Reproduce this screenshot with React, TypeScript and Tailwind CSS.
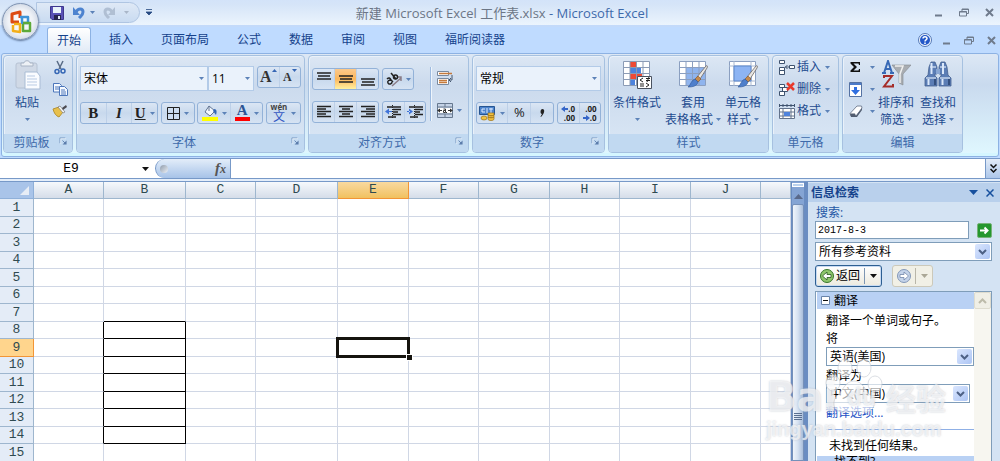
import React from "react";

const tabs = ["开始", "插入", "页面布局", "公式", "数据", "审阅", "视图", "福昕阅读器"];

const columns = [
  { name: "A", width: "w-[70px]" },
  { name: "B", width: "w-[82px]" },
  { name: "C", width: "w-[70px]" },
  { name: "D", width: "w-[82px]" },
  { name: "E", width: "w-[71px]" },
  { name: "F", width: "w-[70px]" },
  { name: "G", width: "w-[71px]" },
  { name: "H", width: "w-[70px]" },
  { name: "I", width: "w-[71px]" },
  { name: "J", width: "w-[70px]" },
  { name: "", width: "" },
];

const rows = [1, 2, 3, 4, 5, 6, 7, 8, 9, 10, 11, 12, 13, 14, 15];

// Small down arrow used by every drop-down
function Caret({ className = "text-[#5c82b8]" }: { className?: string }) {
  return (
    <svg viewBox="0 0 5 3" className={`h-[3px] w-[5px] shrink-0 ${className}`}>
      <path d="M0 0h5L2.500 3z" fill="currentColor" />
    </svg>
  );
}

function Group({
  title,
  launcher = false,
  className,
  children,
}: {
  title: string;
  launcher?: boolean;
  className: string;
  children: React.ReactNode;
}) {
  return (
    <section
      className={`flex h-[98px] shrink-0 flex-col overflow-hidden rounded-sm border border-[#a6c1e0] bg-linear-to-b from-[#dce7f4] via-[#cbdaed] via-30% to-[#dbe8f6] shadow-[inset_1px_1px_0_#e9f1fa] ${className}`}
    >
      <div className="flex min-h-0 flex-1">{children}</div>
      <div className="flex h-[18px] shrink-0 items-center bg-[#c1d9f1] px-1 text-[#3e6aaa]">
        <span className={launcher ? "flex-1 pb-px text-center leading-4" : "flex-1 pb-px text-center leading-4"}>{title}</span>
        {launcher && (
          <button aria-label={`${title}设置`} className="mb-1 ml-1 mr-px">
            <svg viewBox="0 0 9 9" className="h-2 w-2" fill="none">
              <path d="M1 7V1h6" stroke="#7d9cc4" />
              <path d="M2 8V2h6" stroke="#fff" strokeWidth=".6" />
              <path d="M4 4l3 3" stroke="#5b7cab" />
              <path d="M8.500 4v4.500H4z" fill="#5b7cab" />
            </svg>
          </button>
        )}
      </div>
    </section>
  );
}

// Bordered strip of joined buttons
function Strip({ children, className = "" }: { children: React.ReactNode; className?: string }) {
  return (
    <div
      className={`flex h-[22px] items-stretch divide-x divide-[#bdd0e8] rounded-[3px] border border-[#93b2d8] bg-linear-to-b from-[#dbe6f4] via-[#c8d9ed] to-[#d6e3f3] ${className}`}
    >
      {children}
    </div>
  );
}

function Tool({
  label,
  children,
  className = "",
}: {
  label: string;
  children: React.ReactNode;
  className?: string;
}) {
  return (
    <button
      aria-label={label}
      className={`flex min-w-0 flex-1 items-center justify-center gap-1 ${className}`}
    >
      {children}
    </button>
  );
}

function RibbonSelect({ label, value, className }: { label: string; value: string; className: string }) {
  return (
    <div className={`relative ${className}`}>
      <select
        aria-label={label}
        className="h-[25px] w-full appearance-none border border-[#b3cbe8] bg-[#eaf2fb] pl-[3px] text-black"
      >
        <option>{value}</option>
      </select>
      <span className="pointer-events-none absolute right-1 top-[11px]">
        <Caret />
      </span>
    </div>
  );
}

function PaneSelect({ label, value, className = "" }: { label: string; value: string; className?: string }) {
  return (
    <div className={`relative ${className}`}>
      <select
        id={label}
        aria-label={label}
        className="block h-[19px] w-full appearance-none border border-[#7f9db9] bg-white pl-[3px] leading-4 text-black"
      >
        <option>{value}</option>
      </select>
      <span className="pointer-events-none absolute right-[2px] top-[2px] flex h-[15px] w-[15px] items-center justify-center rounded-[2px] bg-linear-to-br from-[#dae6fe] to-[#adc5f4]">
        <svg viewBox="0 0 9 6" className="h-[6px] w-[9px]">
          <path d="M1 1l3.500 3.500L8 1" fill="none" stroke="#4d6185" strokeWidth="2" />
        </svg>
      </span>
    </div>
  );
}

function BigButton({ icon, lines, className }: { icon: React.ReactNode; lines: string[]; className: string }) {
  return (
    <button className={`flex shrink-0 flex-col items-center pt-1 leading-[17px] text-[#1e4b8f] ${className}`}>
      <span className="flex h-[34px] items-start justify-center">{icon}</span>
      <span className="whitespace-nowrap">{lines[0]}</span>
      <span className="flex h-[17px] items-center gap-[3px] whitespace-nowrap">
        {lines[1]}
        <Caret />
      </span>
    </button>
  );
}

function Lines({ d }: { d: string }) {
  return (
    <svg viewBox="0 0 14 14" className="h-[14px] w-[14px] shrink-0">
      <path d={d} stroke="#222" strokeWidth="1.500" fill="none" />
    </svg>
  );
}

function WindowButtons({ small = false }: { small?: boolean }) {
  return (
    <div className={small ? "flex items-center gap-[13px]" : "flex items-center gap-4"}>
      <button aria-label="最小化">
        <svg viewBox="0 0 9 9" className="h-[9px] w-[9px]">
          <path d="M1 7.500h7" stroke="#6f7b8c" strokeWidth="2" />
        </svg>
      </button>
      <button aria-label="还原">
        <svg viewBox="0 0 10 9" className="h-[9px] w-[10px]" fill="none" stroke="#6f7b8c">
          <path d="M3 3V1h6.500v4.500H8M3 1.500h6" />
          <path d="M.5 3.500h7v4.500h-7zM.5 4h7" />
        </svg>
      </button>
      <button aria-label="关闭">
        <svg viewBox="0 0 9 9" className="h-[9px] w-[9px]">
          <path d="M1 1l7 7M8 1L1 8" stroke="#6f7b8c" strokeWidth="2" />
        </svg>
      </button>
    </div>
  );
}

function OfficeLogo() {
  return (
    <svg viewBox="0 0 24 24" className="h-6 w-6" fill="none" strokeWidth="3" strokeLinejoin="round">
      <path d="M10 12H3V4l8-2v6" stroke="#dd4b12" />
      <path d="M11 7h8v6h-6V8" stroke="#3e94d8" strokeWidth="2.500" />
      <path d="M5 14h6v8l-7-1v-6" stroke="#f3ae18" strokeWidth="2.500" />
      <path d="M14 13h7v8h-7v-7" stroke="#5daa39" strokeWidth="2.500" />
    </svg>
  );
}

function TitleBar() {
  return (
    <header className="flex h-[27px] items-start border-b-2 border-[#c3dafa] bg-linear-to-b from-[#d3e3f9] via-[#d6e5f8] via-20% to-[#ebf4fd]">
      <div className="ml-9 mt-[2px] flex h-[21px] w-[104px] items-center rounded-r-full border border-[#afc5e2] bg-linear-to-b from-[#dfe9f6] to-[#c9dbf1] pl-[13px]">
        <button aria-label="保存">
          <svg viewBox="0 0 14 14" className="h-[14px] w-[14px]">
            <path d="M.5.500h13v13H2l-1.500-1.500z" fill="#5951b5" stroke="#3d368e" />
            <path d="M3 1h8v6H3z" fill="#e9f2fb" />
            <path d="M4 9h7v5H4z" fill="#26244d" />
            <path d="M8 10h2v3H8z" fill="#dfe6f5" />
          </svg>
        </button>
        <button aria-label="撤销" className="ml-2">
          <svg viewBox="0 0 13 13" className="h-[13px] w-[13px]">
            <path d="M4 6c2-4 7-4 7 0 0 3-2 4-4 6" fill="none" stroke="#4d83cf" strokeWidth="3" />
            <path d="M1 1v8h7z" fill="#4d83cf" />
          </svg>
        </button>
        <span className="ml-[5px] flex"><Caret /></span>
        <button aria-label="重做" className="ml-2">
          <svg viewBox="0 0 13 13" className="h-[13px] w-[13px]">
            <path d="M9 6C7 2 2 2 2 6c0 3 2 4 4 6" fill="none" stroke="#b0bfd3" strokeWidth="3" />
            <path d="M12 1v8H5z" fill="#b0bfd3" />
          </svg>
        </button>
        <span className="ml-2 flex"><Caret className="text-[#a9b6c8]" /></span>
      </div>
      <button aria-label="自定义快速访问工具栏" className="ml-[6px] mt-[9px]">
        <svg viewBox="0 0 6 6" className="h-[6px] w-[6px]">
          <path d="M0 .5h6M0 3h6L3 6z" fill="#274a82" stroke="#274a82" strokeWidth=".8" />
        </svg>
      </button>
      <h1 className="flex-1 whitespace-pre pl-12 text-center text-[13px] leading-[27px] text-[#6c7686]">
        新建 Microsoft Excel 工作表.xlsx <span className="text-[#3e6aaa]">- Microsoft Excel</span>
      </h1>
      <div className="ml-[130px] mr-[6px] mt-[8px] flex">
        <WindowButtons />
      </div>
    </header>
  );
}

function TabBar() {
  return (
    <nav className="flex h-[26px] items-end bg-[#bfdbff] pl-[47px]">
      <div className="flex gap-2">
        {tabs.map((tab, i) => (
          <button
            key={tab}
            className={
              i === 0
                ? "h-[26px] rounded-t-[3px] border border-b-0 border-[#8db2e3] bg-linear-to-b from-white to-[#e0eaf6] px-[9px] text-[#15428b]"
                : "h-[26px] px-[10px] text-[#15428b]"
            }
          >
            {tab}
          </button>
        ))}
      </div>
      <div className="ml-auto mr-1 flex h-[26px] items-center gap-[10px]">
        <button aria-label="帮助">
          <svg viewBox="0 0 14 14" className="h-[14px] w-[14px]">
            <circle cx="7" cy="7" r="6.500" fill="#eef5ff" stroke="#5578b5" />
            <circle cx="7" cy="7" r="5" fill="#2458c8" />
            <path d="M5 5.500c0-2.500 4-2.500 4 0C9 7 7 6.800 7 8.500M7 9.500V11" fill="none" stroke="#fff" strokeWidth="1.500" />
          </svg>
        </button>
        <WindowButtons small />
      </div>
    </nav>
  );
}

function ClipboardGroup() {
  return (
    <Group title="剪贴板" launcher className="w-[70px]">
      <BigButton
        className="w-[46px]"
        lines={["粘贴", ""]}
        icon={
          <svg viewBox="0 0 28 30" className="h-[30px] w-7">
            <rect x="3" y="3" width="21" height="25" rx="2" fill="#d0d9e6" stroke="#b6c2d3" />
            <path d="M8 6V3h3c0-3 6-3 6 0h3v3z" fill="#edf1f6" stroke="#a8b4c5" />
            <path d="M12 12h12l3 4v13H12z" fill="#fafcff" stroke="#a9bcd5" />
            <path d="M14 16h8M14 19h10M14 22h10M14 25h10" stroke="#b9cbe4" />
          </svg>
        }
      />
      <div className="flex flex-col">
        <button aria-label="剪切" className="flex h-[22px] w-5 items-center justify-center">
          <svg viewBox="0 0 12 15" className="h-[15px] w-3" fill="none">
            <path d="M3 1l4 8M9 1L5 9" stroke="#596b85" strokeWidth="1.500" />
            <circle cx="3" cy="11.500" r="2" stroke="#3566b4" strokeWidth="1.500" />
            <circle cx="9" cy="11" r="2" stroke="#3566b4" strokeWidth="1.500" />
          </svg>
        </button>
        <button aria-label="复制" className="flex h-[22px] w-5 items-center justify-center">
          <svg viewBox="0 0 15 13" className="h-[13px] w-[15px]" fill="#f5f9ff" stroke="#4c76bb">
            <path d="M.5.500h6l2 2V9h-8zM2 4h4M2 6h4" />
            <path d="M6.500 3.500h5l3 3v6h-8zM8 7h4M8 9h5M8 11h5" />
          </svg>
        </button>
        <button aria-label="格式刷" className="flex h-[22px] w-5 items-center justify-center">
          <svg viewBox="0 0 16 14" className="h-[14px] w-4">
            <path d="M1 5l6-2 4 5-4 5c-3-1-5-4-6-8z" fill="#e8c04c" stroke="#b59235" />
            <path d="M6 3l2-1 5 6-2 1z" fill="#f8f8f8" stroke="#777" strokeWidth=".7" />
            <path d="M10 4l4-3 1 2-4 3z" fill="#4a4950" />
          </svg>
        </button>
      </div>
    </Group>
  );
}

function FontGroup() {
  return (
    <Group title="字体" launcher className="w-[229px]">
      <div className="flex flex-1 flex-col gap-[11px] px-[3px] pt-[10px]">
        <div className="flex items-start">
          <RibbonSelect label="字体" value="宋体" className="w-[128px]" />
          <RibbonSelect label="字号" value="11" className="w-[46px]" />
          <Strip className="ml-[3px] flex-1">
            <Tool label="增大字号" className="font-[Liberation_Serif] text-[16px] font-bold text-[#333]">
              <span className="flex">A<svg viewBox="0 0 5 3" className="mt-1 h-[3px] w-[5px]"><path d="M0 3h5L2.500 0z" fill="#3566b4" /></svg></span>
            </Tool>
            <Tool label="减小字号" className="font-[Liberation_Serif] text-[12px] font-bold text-[#333]">
              <span className="flex">A<Caret className="mt-px text-[#3566b4]" /></span>
            </Tool>
          </Strip>
        </div>
        <div className="flex justify-between">
          <Strip className="w-[78px] font-[Liberation_Serif] text-[15px] font-bold text-[#222]">
            <Tool label="加粗">B</Tool>
            <Tool label="倾斜" className="italic">I</Tool>
            <Tool label="下划线"><u>U</u><Caret /></Tool>
          </Strip>
          <Strip className="w-[34px]">
            <Tool label="边框">
              <svg viewBox="0 0 13 13" className="h-[13px] w-[13px]"><path d="M.5.500h12v12H.5zM6.500 0v13M0 6.500h13" fill="none" stroke="#222" /></svg>
              <Caret />
            </Tool>
          </Strip>
          <Strip className="w-[66px]">
            <Tool label="填充颜色">
              <svg viewBox="0 0 16 16" className="h-4 w-4">
                <path d="M7 1l6 5-5 5-5-4z" fill="#f3f7fc" stroke="#627593" />
                <path d="M7 6V1" stroke="#627593" />
                <path d="M12 4c3 0 3 3 2 6-1-1-2-3-3-4z" fill="#3566b4" />
                <path d="M0 12h16v4H0z" fill="#ff0" />
              </svg>
              <Caret />
            </Tool>
            <Tool label="字体颜色">
              <span className="flex h-4 w-[15px] items-end justify-center border-b-4 border-[#f00] font-[Liberation_Serif] text-[15px] font-bold leading-[13px] text-[#2d5594]">A</span>
              <Caret />
            </Tool>
          </Strip>
          <Strip className="w-[35px]">
            <Tool label="拼音指南">
              <span className="flex flex-col items-center">
                <span className="text-[8px] font-bold leading-[8px] text-[#444]">wén</span>
                <span className="text-[12px] leading-[12px] text-[#3356c2]">文</span>
              </span>
              <Caret />
            </Tool>
          </Strip>
        </div>
      </div>
    </Group>
  );
}

function AlignGroup() {
  return (
    <Group title="对齐方式" launcher className="w-[161px]">
      <div className="flex flex-col gap-[11px] pl-[3px] pt-3">
        <div className="flex gap-[3px]">
          <Strip className="w-[67px]">
            <Tool label="顶端对齐"><Lines d="M0 1h14M1 4h12M0 7h14" /></Tool>
            <Tool label="垂直居中" className="bg-linear-to-b from-[#fbc98c] via-[#fbb65a] to-[#fff0a0]">
              <Lines d="M0 4h14M1 7h12M0 10h14" />
            </Tool>
            <Tool label="底端对齐"><Lines d="M0 7h14M1 10h12M0 13h14" /></Tool>
          </Strip>
          <Strip className="w-[32px]">
            <Tool label="方向">
              <svg viewBox="0 0 16 15" className="h-[15px] w-4 shrink-0">
                <path d="M6 14l9-8M11 5h4v4" fill="none" stroke="#8a7d88" strokeWidth="1.500" />
                <g fill="none" stroke="#222" strokeWidth="1.500">
                  <path d="M1 7c2-2 3-1 4 1l2 2M5 8c-2 0-4 1-3 3s4 1 4-1" />
                  <path d="M5 1l5 6" />
                  <circle cx="9.500" cy="5" r="2" />
                </g>
              </svg>
              <Caret />
            </Tool>
          </Strip>
        </div>
        <div className="flex gap-[3px]">
          <Strip className="w-[67px]">
            <Tool label="左对齐"><Lines d="M0 1.500h14M0 4h9M0 6.500h14M0 9h9M0 11.500h14" /></Tool>
            <Tool label="居中"><Lines d="M0 1.500h14M3 4h8M0 6.500h14M3 9h8M0 11.500h14" /></Tool>
            <Tool label="右对齐"><Lines d="M0 1.500h14M5 4h9M0 6.500h14M5 9h9M0 11.500h14" /></Tool>
          </Strip>
          <Strip className="w-[44px]">
            <Tool label="减少缩进量">
              <svg viewBox="0 0 16 14" className="h-[14px] w-4 shrink-0">
                <path d="M2 2h14M8 4.500h8M8 7h5M8 9.500h8M3 12h8" stroke="#222" strokeWidth="1.500" />
                <path d="M7.500 0v14" stroke="#222" strokeDasharray="1 1" />
                <path d="M0 6.500l4-3v6zM4 6h3v1H4z" fill="#3f73d8" />
              </svg>
            </Tool>
            <Tool label="增加缩进量">
              <svg viewBox="0 0 16 14" className="h-[14px] w-4 shrink-0">
                <path d="M2 2h14M8 4.500h8M8 7h5M8 9.500h8M3 12h8" stroke="#222" strokeWidth="1.500" />
                <path d="M7.500 0v14" stroke="#222" strokeDasharray="1 1" />
                <path d="M6 6.500l-4-3v6zM0 6h3v1H0z" fill="#3f73d8" />
              </svg>
            </Tool>
          </Strip>
        </div>
      </div>
      <div className="ml-1 mt-[11px] h-[54px] w-px bg-[#9ebbe0] shadow-[1px_0_0_#eef5fc]" />
      <div className="flex flex-col gap-[17px] pl-[6px] pt-[14px]">
        <button aria-label="自动换行">
          <svg viewBox="0 0 16 16" className="h-4 w-4">
            <path d="M.5 1.500h11v4H.5zM.5 8.500h11v6H.5z" fill="#fff" stroke="#78899f" />
            <path d="M2 3.500h13M2 10.500h8M2 12.500h8" stroke="#c57a3c" strokeWidth="1.500" />
            <path d="M15 5v5h-2M14 8l-2 2 2 2" fill="none" stroke="#44566e" />
          </svg>
        </button>
        <button aria-label="合并后居中" className="flex items-center gap-1">
          <svg viewBox="0 0 16 15" className="h-[15px] w-4">
            <path d="M.5.500h15v14H.5zM0 4h16M0 11h16M8 0v4M8 11v4" fill="#c4d2e6" stroke="#66788f" />
            <path d="M1 5h14v5H1z" fill="#fff" />
            <path d="M0 7.500l3-2v4zM16 7.500l-3-2v4zM3 7h2v1H3zM11 7h2v1h-2z" fill="#333" />
            <path d="M6.500 6h2v3.500h-2v-2h2M9 9.500h1" fill="none" stroke="#333" />
          </svg>
          <Caret />
        </button>
      </div>
    </Group>
  );
}

function NumberGroup() {
  return (
    <Group title="数字" launcher className="w-[133px]">
      <div className="flex flex-1 flex-col gap-[11px] px-[3px] pt-[10px]">
        <RibbonSelect label="数字格式" value="常规" className="w-full" />
        <div className="flex gap-[3px]">
          <Strip className="w-[78px] text-[#222]">
            <Tool label="会计数字格式" className="flex-[1.4]">
              <svg viewBox="0 0 17 16" className="h-4 w-[17px] shrink-0">
                <path d="M.5 1.500h15v8H.5z" fill="#4c83cc" stroke="#265592" />
                <path d="M3 4h3M3 4v3h3M8 3v5M12 3v5M10 4h4" stroke="#dceafe" fill="none" />
                <ellipse cx="5" cy="13" rx="3" ry="2" fill="#f1c141" stroke="#9e7417" strokeWidth=".7" />
                <path d="M9 8h6v6c0 2-6 2-6 0z" fill="#f1c141" stroke="#9e7417" strokeWidth=".7" />
                <path d="M9 10c1 1 5 1 6 0M9 12c1 1 5 1 6 0" stroke="#9e7417" fill="none" />
              </svg>
              <Caret />
            </Tool>
            <Tool label="百分比样式" className="text-[13px]">%</Tool>
            <Tool label="千位分隔样式">
              <svg viewBox="0 0 5 8" className="h-2 w-[5px]"><path d="M2.500 0C5 0 5 4 1 8l-.5-.5L2 5C0 5 0 0 2.500 0z" fill="#222" /></svg>
            </Tool>
          </Strip>
          <Strip className="flex-1 text-[8px] font-bold leading-[9px] text-[#222]">
            <Tool label="增加小数位数">
              <span className="flex flex-col items-end">
                <span className="flex items-center">
                  <svg viewBox="0 0 7 6" className="h-[6px] w-[7px]"><path d="M0 3l4-3v2h3v2H4v2z" fill="#3566c8" /></svg>.0
                </span>
                <span>.00</span>
              </span>
            </Tool>
            <Tool label="减少小数位数">
              <span className="flex flex-col items-end">
                <span>.00</span>
                <span className="flex items-center">
                  <svg viewBox="0 0 7 6" className="h-[6px] w-[7px]"><path d="M7 3L3 0v2H0v2h3v2z" fill="#3566c8" /></svg>.0
                </span>
              </span>
            </Tool>
          </Strip>
        </div>
      </div>
    </Group>
  );
}

function Brush() {
  return (
    <g>
      <path d="M28 6c1-1 2 0 1 2l-7 11-3-2z" fill="#e8e6e3" stroke="#6f6a66" strokeWidth=".8" />
      <path d="M20 16l3 3-3 3-3-3z" fill="#c58a4d" stroke="#7d5129" strokeWidth=".6" />
      <path d="M17 19l3 3c-1 4-5 5-10 5 3-2 3-7 7-8z" fill="#4f7fcb" stroke="#2f5694" strokeWidth=".6" />
    </g>
  );
}

function StylesGroup() {
  return (
    <Group title="样式" className="w-[161px]">
      <div className="flex gap-1 pl-1">
        <BigButton
          className="w-12"
          lines={["条件格式", ""]}
          icon={
            <svg viewBox="0 0 30 29" className="h-[29px] w-[30px]">
              <path d="M1.500 1.500h26v24h-26z" fill="#fff" />
              <path d="M8 1h6v7H8zM8 14h12v6H8z" fill="#ee4a35" />
              <path d="M8 8h11v6H8zM8 20h5v6H8z" fill="#4d83dd" />
              <path d="M1.500 1.500h26v24h-26zM8 1v25M14.500 1v25M21 1v25M1 7.500h27M1 13.500h27M1 19.500h27" fill="none" stroke="#8b9bb5" />
              <path d="M15.500 16.500h14v12h-14z" fill="#fff" stroke="#4a5260" />
              <path d="M21 18l-3 2 3 2M18 24h4M18 26h4M24 18.500h4M24 20.500h4M27 17l-2 5M24 23l3 2-3 2" fill="none" stroke="#222" />
            </svg>
          }
        />
        <BigButton
          className="w-14"
          lines={["套用", "表格格式"]}
          icon={
            <svg viewBox="0 0 30 29" className="h-[29px] w-[30px]">
              <path d="M1.500 1.500h26v24h-26z" fill="#fff" />
              <path d="M8 7h19v18H8z" fill="#8fb4ee" />
              <path d="M1.500 1.500h26v24h-26zM8 1v25M14.500 1v25M21 1v25M1 7.500h27M1 13.500h27M1 19.500h27" fill="none" stroke="#8b9fc0" />
              <Brush />
            </svg>
          }
        />
        <BigButton
          className="w-9"
          lines={["单元格", "样式"]}
          icon={
            <svg viewBox="0 0 30 29" className="h-[29px] w-[30px]">
              <path d="M1.500 1.500h26v24h-26z" fill="#fff" stroke="#8b9fc0" />
              <path d="M6 1v25M23 1v25M1 6h27M1 21h27" stroke="#a9b8d0" />
              <path d="M6 6h17v15H6z" fill="#8db4f3" stroke="#5d87ca" />
              <Brush />
            </svg>
          }
        />
      </div>
    </Group>
  );
}

function CellsGroup() {
  const items = [
    {
      name: "插入",
      icon: <path d="M.5.500h5v3h-5zM.5 7.500h5v3h-5zM.5 10.500h5v4h-5zM10.500 5.500h5v3h-5zM6 7h4M8.500 5L6.500 7l2 2" fill="#fff" stroke="#3f536f" />,
    },
    {
      name: "删除",
      icon: (
        <>
          <path d="M.5 2.500h5v3h-5zM3.500 5.500h5v4h-5zM.5 9.500h5v4h-5z" fill="#fff" stroke="#3f536f" />
          <path d="M8 1l7 7M15 1L8 8" stroke="#e8392b" strokeWidth="2.500" />
        </>
      ),
    },
    {
      name: "格式",
      icon: (
        <>
          <path d="M.5 4.500h15v10H.5zM4 4v11M12 4v11M0 8h16M0 12h16" fill="#fff" stroke="#62738c" />
          <path d="M5 8h6v4H5z" fill="#4f83dc" />
          <path d="M.5 0v3M15.500 0v3M1 1.500h14M4 0v3M8 0v3M12 0v3" stroke="#3f536f" />
        </>
      ),
    },
  ];

  return (
    <Group title="单元格" className="w-[67px]">
      <div className="flex flex-col pl-[6px] text-[#1e4b8f]">
        {items.map((item) => (
          <button key={item.name} className="flex h-[22px] items-center">
            <svg viewBox="0 0 16 15" className="mr-[2px] h-[15px] w-4">{item.icon}</svg>
            {item.name}
            <span className="ml-1 flex"><Caret /></span>
          </button>
        ))}
      </div>
    </Group>
  );
}

function Binoculars() {
  return (
    <svg viewBox="0 0 28 28" className="h-7 w-7">
      <path d="M7 2h4l2 5v7h-2v2l2 2v8H1v-8l3-3 1-8z" fill="#5b7db5" stroke="#45618f" strokeWidth=".8" />
      <path d="M21 2h-4l-2 5v7h2v2l-2 2v8h12v-8l-3-3-1-8z" fill="#5b7db5" stroke="#45618f" strokeWidth=".8" />
      <path d="M12 9h4v5h-4z" fill="#89a6d2" />
      <path d="M6 7h6M16 7h6M2 18h10M16 18h10" stroke="#c3d3ec" strokeWidth="1.500" />
      <path d="M4.500 19v6M18.500 19v6M7.500 3v11M19 3v11" stroke="#dbe8fa" strokeWidth="2" />
      <path d="M11 19v6M25 19v6" stroke="#34507f" strokeWidth="2" />
    </svg>
  );
}

function EditGroup() {
  return (
    <Group title="编辑" className="w-[121px]">
      <div className="flex w-[34px] flex-col pl-[6px]">
        <button aria-label="求和" className="flex h-[22px] items-center gap-2">
          <svg viewBox="0 0 12 12" className="h-3 w-[13px]">
            <path d="M1 1h9.500v3h-1L9 2.500H4L7.500 6 4 9.500h5l.5-1.500h1v3H1V9.500L4.500 6 1 2.500z" fill="#111" />
          </svg>
          <Caret />
        </button>
        <button aria-label="填充" className="flex h-[22px] items-center gap-[7px]">
          <svg viewBox="0 0 14 15" className="h-[15px] w-[14px]">
            <path d="M.5.500h12v14H.5z" fill="#fff" stroke="#5572a3" />
            <path d="M1 1h11v2H1z" fill="#4c7bc9" />
            <path d="M5 5h3v3h3l-4.500 5L2 8h3z" fill="#2f6ee0" />
          </svg>
          <Caret />
        </button>
        <button aria-label="清除" className="flex h-[22px] items-center gap-[7px]">
          <svg viewBox="0 0 14 13" className="h-[13px] w-[14px]">
            <path d="M1 8.500L8 1h4.500l.5 2-6 8H2z" fill="#fff" stroke="#7a869a" />
            <path d="M1 8.500h5L7 11l6-8v2l-5 7H2z" fill="#525d70" />
          </svg>
          <Caret />
        </button>
      </div>
      <div className="flex gap-1">
        <BigButton
          className="w-[38px]"
          lines={["排序和", "筛选"]}
          icon={
            <svg viewBox="0 0 29 29" className="h-[29px] w-[29px]">
              <path d="M2 13L6 1l4 12M4 9h5M0 13h4M8 13h4" fill="none" stroke="#3869b5" strokeWidth="2" />
              <path d="M2 18v-2h8L2 26.500h9V24" fill="none" stroke="#a52d2a" strokeWidth="2" />
              <path d="M10 5h19l-8 9v11l-4-2V14z" fill="#a9adb2" stroke="#85898e" strokeWidth=".6" />
              <path d="M13 6h8l-3 8v9" fill="none" stroke="#f0f0ef" strokeWidth="1.500" />
            </svg>
          }
        />
        <BigButton className="w-[38px]" lines={["查找和", "选择"]} icon={<Binoculars />} />
      </div>
    </Group>
  );
}

function FormulaBar() {
  return (
    <div className="flex h-[21px] border-y border-[#7799c8] bg-white">
      <div className="flex w-[155px] items-center pr-[6px]">
        <input
          aria-label="名称框"
          defaultValue="E9"
          className="w-full min-w-0 flex-1 text-center font-[Liberation_Mono] text-[13px] leading-4 text-black outline-none"
        />
        <svg viewBox="0 0 7 4" className="h-1 w-[7px]"><path d="M0 0h7L3.500 4z" fill="#111" /></svg>
      </div>
      <div className="flex w-[76px] items-center justify-between rounded-l-full border-x border-[#7799c8] bg-linear-to-b from-[#e3edf9] to-[#a7c3e8] pl-1 pr-1">
        <span className="h-2 w-2 rounded-full bg-linear-to-br from-[#8f9bab] to-[#eef2f7]" />
        <button className="font-[Liberation_Serif] text-[15px] font-bold italic leading-4 text-[#555]">
          f<span className="text-[12px]">x</span>
        </button>
      </div>
      <input aria-label="编辑栏" className="min-w-0 flex-1 px-1 outline-none" />
      <button
        aria-label="展开编辑栏"
        className="flex w-[15px] items-center justify-center border-l border-[#7799c8] bg-linear-to-b from-[#e3ecf8] to-[#adc7ea]"
      >
        <svg viewBox="0 0 7 9" className="h-[9px] w-[7px]">
          <path d="M.5.500l3 3 3-3M.5 5l3 3 3-3" fill="none" stroke="#111" strokeWidth="1.500" />
        </svg>
      </button>
    </div>
  );
}

function Sheet() {
  const cellBorder = (row: number, col: string) => {
    const boxed = row >= 8 && row <= 14;
    if (col === "B" && boxed) return "border-black";
    if (col === "B" && row === 7) return "border-r-[#d0d7e5] border-b-black";
    if (col === "A" && boxed) return "border-r-black border-b-[#d0d7e5]";
    return "border-[#d0d7e5]";
  };

  return (
    <table className="w-full table-fixed border-separate border-spacing-0 font-[Liberation_Mono] text-[13px] leading-4 text-[#2f4a50]">
      <colgroup>
        <col className="w-[34px]" />
        {columns.map((col) => (
          <col key={col.name} className={col.width} />
        ))}
      </colgroup>
      <thead>
        <tr className="h-[17px]">
          <td className="border-b border-r border-[#8fb0d9] bg-[#a9c4e9] p-0">
            <svg viewBox="0 0 9 9" className="ml-auto mr-1 h-[9px] w-[9px]"><path d="M9 0v9H0z" fill="#e7edf6" /></svg>
          </td>
          {columns.map((col) => (
            <th
              key={col.name}
              scope="col"
              className={
                col.name === "E"
                  ? "border-b border-r border-[#f29536] bg-linear-to-b from-[#f9d99f] to-[#f1c15f] p-0 font-normal"
                  : "border-b border-r border-[#9eb6ce] bg-linear-to-b from-[#f6f9fc] to-[#d5dde9] p-0 font-normal"
              }
            >
              {col.name}
            </th>
          ))}
        </tr>
      </thead>
      <tbody>
        {rows.map((row) => (
          <tr key={row} className={row % 2 ? "h-[18px]" : "h-[17px]"}>
            <th
              scope="row"
              className={
                row === 9
                  ? "border-b border-r border-[#f29536] bg-[#ffd58d] p-0 font-normal"
                  : "border-b border-r border-[#9eb6ce] bg-[#e4ecf7] p-0 font-normal"
              }
            >
              {row}
            </th>
            {columns.map((col) => (
              <td key={col.name} className={`relative border-b border-r p-0 ${cellBorder(row, col.name)}`}>
                {row === 9 && col.name === "E" && (
                  <span className="absolute -inset-[2px] z-10 border-[3px] border-[#16140f]">
                    <span className="absolute -bottom-[5px] -right-[5px] h-[5px] w-[5px] bg-[#16140f] outline outline-white" />
                  </span>
                )}
              </td>
            ))}
          </tr>
        ))}
      </tbody>
    </table>
  );
}

function ScrollBar() {
  return (
    <div className="flex w-[17px] shrink-0 flex-col border-l border-r-4 border-[#6a8dc2] bg-[#84a4d4]">
      <div className="mb-px mt-px h-1 border border-white bg-[#bcd3ee]" />
      <button aria-label="向上滚动" className="flex h-[16px] items-center justify-center">
        <svg viewBox="0 0 9 5" className="h-[5px] w-[9px]"><path d="M0 5h9L4.500 0z" fill="#59698a" /></svg>
      </button>
      <div className="flex flex-1 flex-col items-center rounded-t-[2px] border border-[#7590b9] bg-linear-to-r from-[#f0f5fb] via-[#d5e1f1] to-[#a9bedb] pt-[208px]">
        <svg viewBox="0 0 8 8" className="h-2 w-2"><path d="M0 .5h8M0 2.500h8M0 4.500h8M0 6.500h8" stroke="#5a6f90" /></svg>
      </div>
    </div>
  );
}

function ResearchPane() {
  return (
    <aside className="flex w-[192px] shrink-0 flex-col overflow-hidden bg-[#d4e3f3] text-[12px] leading-4">
      <div className="mt-px flex h-[19px] shrink-0 items-center bg-[#b9d0ec] pl-[3px] pr-[6px]">
        <h2 className="flex-1 font-bold text-[#15428b]">信息检索</h2>
        <svg viewBox="0 0 9 5" className="mr-2 h-[5px] w-[9px]"><path d="M0 0h9L4.500 5z" fill="#17509e" /></svg>
        <button aria-label="关闭信息检索">
          <svg viewBox="0 0 8 8" className="h-2 w-2"><path d="M.5.500l7 7M7.500.500l-7 7" stroke="#17509e" strokeWidth="1.500" /></svg>
        </button>
      </div>
      <div className="flex min-h-0 flex-1 flex-col pl-[7px] pr-2 pt-[3px]">
        <label htmlFor="search" className="shrink-0 pl-px text-[#2357a5]">搜索:</label>
        <div className="flex h-[18px] shrink-0 items-center justify-between">
          <input
            id="search"
            defaultValue="2017-8-3"
            className="h-[18px] w-[154px] border border-[#7f9db9] bg-white pl-[2px] font-[Liberation_Mono] text-[10px] text-black outline-none"
          />
          <button aria-label="开始搜索" className="flex h-[15px] w-[15px] items-center justify-center rounded-[2px] border border-[#77b278] bg-[#25972e]">
            <svg viewBox="0 0 9 9" className="h-[9px] w-[9px]"><path d="M0 4.500h7M4.500 1.500l3 3-3 3" fill="none" stroke="#fff" strokeWidth="2" /></svg>
          </button>
        </div>
        <PaneSelect label="参考资料" value="所有参考资料" className="mt-[3px] shrink-0" />
        <div className="mt-1 flex h-[22px] shrink-0 gap-[10px]">
          <div className="flex w-[67px] items-center rounded-[3px] border border-[#2d5f92] bg-linear-to-b from-white to-[#eceadf] pl-1 text-black shadow-[inset_0_0_0_1px_#c8dbf3]">
            <button className="flex flex-1 items-center gap-[2px]">
              <svg viewBox="0 0 14 14" className="h-[14px] w-[14px]">
                <circle cx="7" cy="7" r="6.500" fill="#8fc66c" stroke="#36752b" />
                <path d="M2.500 7L7 3v2.500h4v3H7V11z" fill="#fff" stroke="#28561f" strokeWidth=".8" />
              </svg>
              返回
            </button>
            <button aria-label="返回历史" className="flex h-4 w-[17px] items-center justify-center border-l border-[#7d96b3]">
              <svg viewBox="0 0 7 4" className="h-1 w-[7px]"><path d="M0 0h7L3.500 4z" fill="#111" /></svg>
            </button>
          </div>
          <div className="flex w-[41px] items-center rounded-[3px] border border-[#ccc9ba] bg-[#f1f0e6]">
            <button aria-label="前进" className="flex flex-1 justify-center">
              <svg viewBox="0 0 14 14" className="h-[14px] w-[14px]">
                <circle cx="7" cy="7" r="6.500" fill="#c4d3e9" stroke="#8297b8" />
                <path d="M11.500 7L7 3v2.500H3v3h4V11z" fill="#fff" stroke="#7287aa" strokeWidth=".8" />
              </svg>
            </button>
            <button aria-label="前进历史" className="flex h-4 w-[17px] items-center justify-center border-l border-[#b9b6a8]">
              <svg viewBox="0 0 7 4" className="h-1 w-[7px]"><path d="M0 0h7L3.500 4z" fill="#aaa796" /></svg>
            </button>
          </div>
        </div>
        <div className="mt-1 flex min-h-0 flex-1 border border-b-0 border-[#7f9db9] bg-white text-black">
          <div className="min-w-0 flex-1 overflow-hidden pl-px">
            <div className="flex h-[17px] items-center gap-1 bg-[#b9d1f4] pl-1">
              <svg viewBox="0 0 9 9" className="h-[9px] w-[9px]"><path d="M.5.500h8v8h-8z" fill="#fff" stroke="#6984aa" /><path d="M2 4.500h5" stroke="#111" /></svg>
              翻译
            </div>
            <div className="flex flex-col pl-[9px] pt-1">
              <p>翻译一个单词或句子。</p>
              <label htmlFor="源语言" className="pt-[2px]">将</label>
              <PaneSelect label="源语言" value="英语(美国)" />
              <label htmlFor="目标语言" className="pt-[2px]">翻译为</label>
              <PaneSelect label="目标语言" value="中文(中国)" className="mr-1" />
              <a href="#options" className="pt-[2px] text-[#1b4fc4]">翻译选项...</a>
              <hr className="mt-2 border-[#8fb0e6]" />
              <p className="pl-[3px] pt-2">未找到任何结果。</p>
            </div>
            <div className="mt-[2px] bg-[#b9d1f4] pl-[17px] leading-3">找不到?</div>
          </div>
          <div className="w-[17px] bg-[#f7f6f0]">
            <button aria-label="向上" className="flex h-[17px] w-full items-center justify-center rounded-[2px] border border-[#dedccf] bg-[#f0efe6]">
              <svg viewBox="0 0 9 6" className="h-[6px] w-[9px]"><path d="M1 5l3.500-3.500L8 5" fill="none" stroke="#bdbbaa" strokeWidth="2" /></svg>
            </button>
          </div>
        </div>
      </div>
    </aside>
  );
}

function Watermark() {
  return (
    <div className="pointer-events-none absolute bottom-5 right-[54px] w-[180px] whitespace-nowrap font-[Liberation_Sans] font-bold text-white/65 [text-shadow:0_0_2px_#a3abb8aa]">
      <div className="relative flex h-10 items-end justify-between leading-10">
        <svg viewBox="0 0 60 62" className="absolute bottom-0 left-[58px] h-[62px] w-[60px] opacity-65">
          <g fill="#fff" stroke="#c9ced6">
            <ellipse cx="9" cy="28" rx="7" ry="8" />
            <ellipse cx="21" cy="13" rx="7" ry="9" />
            <ellipse cx="40" cy="13" rx="7" ry="9" />
            <ellipse cx="51" cy="29" rx="7" ry="8" />
            <path d="M30 26c9 0 11 10 18 16 5 7 1 16-8 15-7-1-13-1-20 0-9 1-13-8-8-15 7-6 9-16 18-16z" />
          </g>
        </svg>
        <span className="font-[DejaVu_Sans] text-[40px]">Bai</span>
        <span className="relative text-[24px]">du</span>
        <span className="font-['Noto_Sans_CJK_SC'] text-[30px]">经验</span>
      </div>
      <div className="text-[20px] leading-6">jingyan.baidu.com</div>
    </div>
  );
}

export default function App() {
  return (
    <div className="relative flex h-screen flex-col overflow-hidden bg-[#bfdbff] font-['Open_Sans','Noto_Sans_CJK_SC',sans-serif] text-[12px]">
      <TitleBar />
      <TabBar />
      <button
        aria-label="Office 按钮"
        className="absolute left-[2px] top-[3px] flex h-[37px] w-[37px] items-center justify-center rounded-full border border-[#8094b3] bg-radial from-white via-[#eef1f6] to-[#b5c2d6] shadow-[0_1px_2px_#5f7699]"
      >
        <OfficeLogo />
      </button>
      <div className="mx-px flex h-[104px] shrink-0 gap-[3px] overflow-hidden rounded-[3px] border border-[#8db2e3] bg-linear-to-b from-[#dde8f5] via-[#c9daee] via-30% to-[#e0f8ff] pl-px pt-px shadow-[inset_0_-3px_0_#d5f6ff]">
        <ClipboardGroup />
        <FontGroup />
        <AlignGroup />
        <NumberGroup />
        <StylesGroup />
        <CellsGroup />
        <EditGroup />
      </div>
      <div className="mt-px shrink-0">
        <FormulaBar />
      </div>
      <div className="h-[2px] shrink-0 bg-[#e4eefa]" />
      <main className="flex min-h-0 flex-1 border-t border-[#7799c8]">
        <div className="min-w-0 flex-1 overflow-hidden bg-white">
          <Sheet />
        </div>
        <ScrollBar />
        <ResearchPane />
      </main>
      <Watermark />
    </div>
  );
}
